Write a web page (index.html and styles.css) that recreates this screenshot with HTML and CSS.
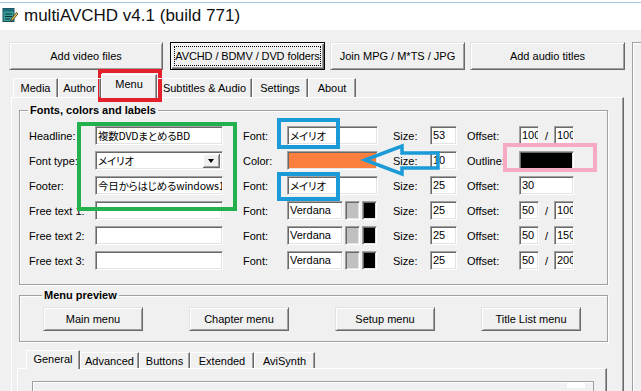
FILE: index.html
```html
<!DOCTYPE html>
<html lang="ja">
<head>
    <meta charset="UTF-8">
    <title>multiAVCHD v4.1 (build 771)</title>
    <link rel="stylesheet" href="styles.css">
</head>
<body>

<div class="titlebar">
    <svg class="app-icon" viewBox="0 0 16 16">
        <rect x="1" y="1.5" width="11" height="13" fill="#3aa09a" stroke="#1d4a57"/>
        <rect x="1" y="1.5" width="11" height="3" fill="#1d6b78"/>
        <path d="M3 7h7M3 9.5h7M3 12h5" stroke="#0e2e36" stroke-width="1"/>
        <path d="M8.5 14.5l1-3 5-6 1.5 1.3-5 6z" fill="#e8c050" stroke="#3a3020" stroke-width="0.8"/>
    </svg>
    <span class="title">multiAVCHD v4.1 (build 771)</span>
</div>

<div class="window">
    <div class="main">
        <div class="toolbar">
            <button class="btn b-video">Add video files</button>
            <button class="btn b-folders default"><span class="focus">AVCHD / BDMV / DVD folders</span></button>
            <button class="btn b-join">Join MPG / M*TS / JPG</button>
            <button class="btn b-audio">Add audio titles</button>
        </div>

        <div class="tabs top-tabs">
            <div class="tab t-media">Media</div>
            <div class="tab t-author">Author</div>
            <div class="tab t-menu selected">Menu</div>
            <div class="tab t-subs">Subtitles &amp; Audio</div>
            <div class="tab t-settings">Settings</div>
            <div class="tab t-about">About</div>
        </div>

        <div class="panel">
            <fieldset class="group fonts">
                <legend>Fonts, colors and labels</legend>

                <div class="row">
                    <span class="lbl">Headline:</span>
                    <div class="field jp">複数DVDまとめるBD</div>
                    <span class="lbl lab-font">Font:</span>
                    <div class="field jp">メイリオ</div>
                    <span class="lbl lab-size">Size:</span>
                    <div class="field">53</div>
                    <span class="lbl lab-off">Offset:</span>
                    <div class="pair"><div class="field small">100</div><span>/</span><div class="field small">100</div></div>
                </div>

                <div class="row">
                    <span class="lbl">Font type:</span>
                    <div class="field combo jp">メイリオ<span class="drop"></span></div>
                    <span class="lbl lab-font">Color:</span>
                    <div class="field swatch orange"></div>
                    <span class="lbl lab-size">Size:</span>
                    <div class="field">10</div>
                    <span class="lbl lab-off">Outline:</span>
                    <div class="field swatch black"></div>
                </div>

                <div class="row">
                    <span class="lbl">Footer:</span>
                    <div class="field jp">今日からはじめるwindows1</div>
                    <span class="lbl lab-font">Font:</span>
                    <div class="field jp">メイリオ</div>
                    <span class="lbl lab-size">Size:</span>
                    <div class="field">25</div>
                    <span class="lbl lab-off">Offset:</span>
                    <div class="field">30</div>
                </div>

                <div class="row">
                    <span class="lbl">Free text 1:</span>
                    <div class="field"></div>
                    <span class="lbl lab-font">Font:</span>
                    <div class="font-cell"><div class="field">Verdana</div><div class="field swatch grey"></div><div class="field swatch black"></div></div>
                    <span class="lbl lab-size">Size:</span>
                    <div class="field">25</div>
                    <span class="lbl lab-off">Offset:</span>
                    <div class="pair"><div class="field small">50</div><span>/</span><div class="field small">100</div></div>
                </div>

                <div class="row">
                    <span class="lbl">Free text 2:</span>
                    <div class="field"></div>
                    <span class="lbl lab-font">Font:</span>
                    <div class="font-cell"><div class="field">Verdana</div><div class="field swatch grey"></div><div class="field swatch black"></div></div>
                    <span class="lbl lab-size">Size:</span>
                    <div class="field">25</div>
                    <span class="lbl lab-off">Offset:</span>
                    <div class="pair"><div class="field small">50</div><span>/</span><div class="field small">150</div></div>
                </div>

                <div class="row">
                    <span class="lbl">Free text 3:</span>
                    <div class="field"></div>
                    <span class="lbl lab-font">Font:</span>
                    <div class="font-cell"><div class="field">Verdana</div><div class="field swatch grey"></div><div class="field swatch black"></div></div>
                    <span class="lbl lab-size">Size:</span>
                    <div class="field">25</div>
                    <span class="lbl lab-off">Offset:</span>
                    <div class="pair"><div class="field small">50</div><span>/</span><div class="field small">200</div></div>
                </div>
            </fieldset>

            <fieldset class="group preview">
                <legend>Menu preview</legend>
                <div class="preview-buttons">
                    <button class="btn b-preview">Main menu</button>
                    <button class="btn b-preview">Chapter menu</button>
                    <button class="btn b-preview">Setup menu</button>
                    <button class="btn b-preview">Title List menu</button>
                </div>
            </fieldset>

            <div class="tabs sub-tabs">
                <div class="tab s-general selected">General</div>
                <div class="tab s-advanced">Advanced</div>
                <div class="tab s-buttons">Buttons</div>
                <div class="tab s-extended">Extended</div>
                <div class="tab s-avisynth">AviSynth</div>
            </div>
            <div class="subpanel">
                <div class="inner-box"><span class="inner-check"></span></div>
            </div>
        </div>
    </div>
    <div class="side"></div>
</div>

<!-- annotation marks drawn over the screenshot -->
<div class="mark mark-red"></div>
<div class="mark mark-green"></div>
<div class="mark mark-blue b1"></div>
<div class="mark mark-blue b2"></div>
<div class="mark mark-pink"></div>
<svg class="arrow" viewBox="0 0 82 40">
    <polygon points="5,20 42,6 42,13 78,13 78,28 42,28 42,34" fill="none" stroke="#1a9bd7" stroke-width="3.5"/>
</svg>

</body>
</html>
```

FILE: styles.css
```css
html, body {
    margin: 0;
    padding: 0;
}

body {
    position: relative;
    width: 641px;
    height: 391px;
    overflow: hidden;
    background: #f0f0f0;
    font-family: "Liberation Sans", Arial, sans-serif;
    font-size: 11px;
    color: #000;
}

/* window title */
.titlebar {
    height: 30px;
    display: flex;
    align-items: center;
    padding-left: 2px;
    background: linear-gradient(#fff 0 2px, #a9c8e6 2px 3px, #fff 3px);
}

.app-icon {
    width: 16px;
    height: 16px;
    flex: none;
}

.title {
    margin-left: 6px;
    font-family: "Liberation Sans", Arial, sans-serif;
    font-size: 17px;
    padding-top: 1px;
    color: #111;
}

.window {
    display: flex;
    align-items: flex-start;
}

.main {
    width: 632px;
    flex: none;
}

.side {
    flex: 1;
    height: 360px;
    margin-top: 12px;
    border-top: 1px solid #a0a0a0;
    border-left: 1px solid #a0a0a0;
    box-shadow: inset 1px 1px 0 #fff;
}

/* buttons */
.btn {
    box-sizing: border-box;
    height: 28px;
    padding: 0;
    font: inherit;
    color: #000;
    white-space: nowrap;
    background: #f0f0f0;
    border: 1px solid;
    border-color: #e3e3e3 #696969 #696969 #e3e3e3;
    box-shadow: inset 1px 1px 0 #fff, inset -1px -1px 0 #a0a0a0;
}

.toolbar {
    display: flex;
    padding: 12px 0 0 9px;
}

.b-video { width: 154px; }
.b-folders { width: 155px; margin-left: 7px; }
.b-join { width: 135px; margin-left: 5px; }
.b-audio { width: 155px; margin-left: 5px; }

.btn.default {
    border-color: #000;
    box-shadow: inset 1px 1px 0 #fff, inset -1px -1px 0 #696969, inset -2px -2px 0 #a0a0a0;
    padding: 3px;
}

.btn.default .focus {
    display: flex;
    align-items: center;
    justify-content: center;
    height: 100%;
    border: 1px dotted #000;
    box-sizing: border-box;
    letter-spacing: -0.1px;
}

/* tab strips */
.tabs {
    display: flex;
    align-items: flex-end;
    position: relative;
    z-index: 1;
}

.tab {
    box-sizing: border-box;
    height: 19px;
    display: flex;
    align-items: center;
    justify-content: center;
    white-space: nowrap;
    border-top: 1px solid #fff;
    border-left: 1px solid #fff;
    border-right: 1px solid #696969;
    box-shadow: inset -1px 0 0 #a0a0a0;
}

.tab.selected {
    height: 24px;
    margin-bottom: -1px;
    background: #f0f0f0;
    padding-bottom: 5px;
}

.top-tabs {
    height: 23px;
    margin-top: 4px;
    padding-left: 13px;
}

.t-media { width: 45px; }
.t-author { width: 43px; }
.t-menu { width: 56px; }
.t-subs { width: 95px; }
.t-settings { width: 56px; }
.t-about { width: 48px; }

.panel {
    box-sizing: border-box;
    width: 613px;
    height: 320px;
    margin-left: 11px;
    padding: 6px 0 0 7px;
    border: 1px solid;
    border-color: #fff #696969 #696969 #fff;
    box-shadow: inset -1px 0 0 #a0a0a0;
}

/* group boxes */
.group {
    box-sizing: border-box;
    width: 589px;
    margin: 0;
    border: 1px solid #a0a0a0;
    box-shadow: inset 1px 1px 0 #fff, 1px 1px 0 #fff;
}

.group legend {
    padding: 0 2px;
    margin-left: -1px;
    font-weight: bold;
    line-height: 13px;
}

.fonts {
    padding: 9px 0 14px 9px;
}

.row {
    display: grid;
    grid-template-columns: 66px 128px 64px 91px 52px 27px 62px 55px;
    align-items: center;
    height: 19px;
    margin-bottom: 6px;
}

.row:last-child {
    margin-bottom: 0;
}

.lbl {
    white-space: nowrap;
    overflow: hidden;
}

.lab-font { padding-left: 20px; }
.lab-size { padding-left: 15px; }
.lab-off { padding-left: 10px; }

.field {
    position: relative;
    box-sizing: border-box;
    height: 19px;
    padding: 0 0 0 2px;
    line-height: 17px;
    background: #fff;
    border: 1px solid;
    border-color: #a0a0a0 #fff #fff #a0a0a0;
    box-shadow: inset 1px 1px 0 #696969, inset -1px -1px 0 #e3e3e3;
    white-space: nowrap;
    overflow: hidden;
}

.field.jp {
    font-family: "Noto Sans CJK JP", "Liberation Sans", sans-serif;
    font-size: 10.5px;
    font-feature-settings: "palt";
    letter-spacing: -0.2px;
}

.field.small {
    width: 20px;
}

.pair {
    display: flex;
    justify-content: space-between;
    align-items: center;
}

.font-cell {
    display: flex;
    gap: 2px;
}

.font-cell .field:first-child {
    width: 56px;
}

.swatch {
    padding: 0;
}

.font-cell .swatch {
    width: 15px;
}

.orange { background: #fd7f3e; }
.grey { background: #c0c0c0; }
.black { background: #000; }

.combo .drop {
    position: absolute;
    right: 2px;
    top: 2px;
    width: 16px;
    height: 13px;
    background: #f0f0f0;
    border-right: 1px solid #696969;
    border-bottom: 1px solid #696969;
    box-shadow: inset 1px 1px 0 #fff, inset -1px -1px 0 #a0a0a0;
}

.combo .drop::after {
    content: "";
    position: absolute;
    left: 5px;
    top: 5px;
    border-left: 3.5px solid transparent;
    border-right: 3.5px solid transparent;
    border-top: 4px solid #000;
}

.preview {
    margin-top: 4px;
    padding: 5px 26px 10px 23px;
}

.preview-buttons {
    display: flex;
    justify-content: space-between;
}

.b-preview {
    width: 100px;
    height: 24px;
}

.sub-tabs {
    height: 18px;
    margin-top: 8px;
    padding-left: 7px;
}

.sub-tabs .tab {
    height: 16px;
}

.sub-tabs .tab.selected {
    height: 19px;
    padding-bottom: 2px;
}

.s-general { width: 54px; }
.s-advanced { width: 59px; }
.s-buttons { width: 51px; }
.s-extended { width: 64px; }
.s-avisynth { width: 61px; }

.subpanel {
    box-sizing: border-box;
    width: 590px;
    height: 40px;
    margin-left: -2px;
    padding: 12px 0 0 14px;
    border: 1px solid;
    border-color: #fff #696969 #696969 #fff;
    box-shadow: inset -1px 0 0 #a0a0a0;
}

.inner-box {
    position: relative;
    width: 560px;
    height: 20px;
    border: 1px solid #a0a0a0;
    box-shadow: inset 1px 1px 0 #fff;
}

.inner-check {
    position: absolute;
    right: 8px;
    top: 0;
    width: 18px;
    height: 6px;
    background: #fff;
}

/* annotations */
.mark {
    position: absolute;
    box-sizing: border-box;
}

.mark-red {
    left: 98px;
    top: 69px;
    width: 64px;
    height: 33px;
    border: 4px solid #e3202b;
}

.mark-green {
    left: 77px;
    top: 122px;
    width: 160px;
    height: 89px;
    border: 4px solid #22b14c;
}

.mark-blue {
    left: 277px;
    width: 63px;
    border: 4px solid #1a9bd7;
}

.mark-blue.b1 {
    top: 118px;
    height: 31px;
}

.mark-blue.b2 {
    top: 172px;
    height: 29px;
}

.mark-pink {
    left: 503px;
    top: 143px;
    width: 94px;
    height: 29px;
    border: 4px solid #f7a9c6;
}

.arrow {
    position: absolute;
    left: 360px;
    top: 140px;
    width: 82px;
    height: 40px;
}
```
